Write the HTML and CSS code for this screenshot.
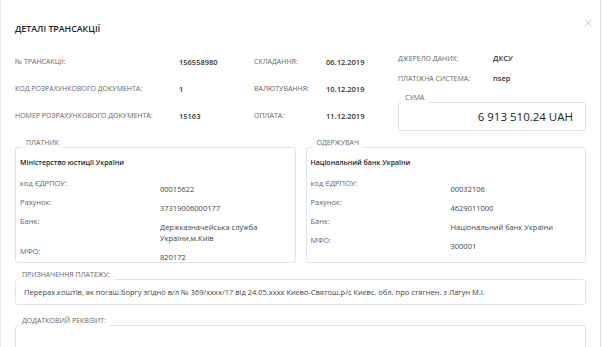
FILE: index.html
```html
<!DOCTYPE html>
<html lang="uk">
<head>
  <meta charset="UTF-8">
  <title>Деталі трансакції</title>
  <link rel="stylesheet" href="styles.css">
</head>
<body>
  <div class="modal">
    <span class="close">&#215;</span>
    <h1 class="title">ДЕТАЛІ ТРАНСАКЦІЇ</h1>

    <div class="info">
      <div class="col col1">
        <div class="row"><span class="lbl">№ ТРАНСАКЦІЇ:</span><span class="val">156558980</span></div>
        <div class="row"><span class="lbl">КОД РОЗРАХУНКОВОГО ДОКУМЕНТА:</span><span class="val">1</span></div>
        <div class="row"><span class="lbl">НОМЕР РОЗРАХУНКОВОГО ДОКУМЕНТА:</span><span class="val">15163</span></div>
      </div>
      <div class="col col2">
        <div class="row"><span class="lbl">СКЛАДАННЯ:</span><span class="val">06.12.2019</span></div>
        <div class="row"><span class="lbl">ВАЛЮТУВАННЯ:</span><span class="val">10.12.2019</span></div>
        <div class="row"><span class="lbl">ОПЛАТА:</span><span class="val">11.12.2019</span></div>
      </div>
      <div class="col col3">
        <div class="row row-sm"><span class="lbl">ДЖЕРЕЛО ДАНИХ:</span><span class="val">ДКСУ</span></div>
        <div class="row row-sm"><span class="lbl">ПЛАТІЖНА СИСТЕМА:</span><span class="val">nsep</span></div>
        <fieldset class="box sum">
          <legend>СУМА</legend>
          <div class="amount">6 913 510.24 UAH</div>
        </fieldset>
      </div>
    </div>

    <div class="parties">
      <fieldset class="box party">
        <legend>ПЛАТНИК</legend>
        <div class="name">Міністерство юстиції України</div>
        <div class="prow"><span class="plbl">код ЄДРПОУ:</span><span class="pval">00015622</span></div>
        <div class="prow"><span class="plbl">Рахунок:</span><span class="pval">37319006000177</span></div>
        <div class="prow"><span class="plbl">Банк:</span><span class="pval">Держказначейська служба<br>України,м.Київ</span></div>
        <div class="prow"><span class="plbl">МФО:</span><span class="pval">820172</span></div>
      </fieldset>
      <fieldset class="box party">
        <legend>ОДЕРЖУВАЧ</legend>
        <div class="name">Національний банк України</div>
        <div class="prow"><span class="plbl">код ЄДРПОУ:</span><span class="pval">00032106</span></div>
        <div class="prow"><span class="plbl">Рахунок:</span><span class="pval">4629011000</span></div>
        <div class="prow"><span class="plbl">Банк:</span><span class="pval">Національний банк України</span></div>
        <div class="prow"><span class="plbl">МФО:</span><span class="pval">300001</span></div>
      </fieldset>
    </div>

    <fieldset class="box wide">
      <legend>ПРИЗНАЧЕННЯ ПЛАТЕЖУ:</legend>
      <div class="purpose">Перерах.коштів, як погаш.боргу згідно в/л № 369/xxxx/17 від 24.05.xxxx Києво-Святош.р/с Києвс. обл. про стягнен. з Лагун М.І.</div>
    </fieldset>

    <fieldset class="box wide extra">
      <legend>ДОДАТКОВИЙ РЕКВІЗИТ:</legend>
    </fieldset>
  </div>
</body>
</html>
```

FILE: styles.css
```css
body { margin: 0; background: #fff; font-family: "Open Sans", "Noto Sans", sans-serif; color: #333; overflow: hidden; }
.modal { position: relative; width: 601px; height: 347px; box-sizing: border-box; padding: 0 14px; border-left: 1px solid #ececec; border-right: 1px solid #e2e2e2; overflow: hidden; }
.close { position: absolute; top: 12px; right: 7px; font-size: 16px; color: #cccccc; font-weight: 300; }
.title { margin: 0; padding-top: 23px; height: 48px; box-sizing: border-box; font-size: 8.8px; line-height: 12px; font-weight: 600; color: #222; }

.info { display: flex; }
.col1 { width: 239px; }
.col2 { width: 144px; }
.col3 { flex: 1; }
.row { display: flex; align-items: center; height: 27px; }
.row-sm { height: 20px; }
.col1 .lbl { width: 164px; }
.col2 .lbl { width: 72px; }
.col3 .lbl { width: 95px; }
.lbl { font-size: 7px; color: #666; text-transform: uppercase; }
.val { font-size: 7.5px; font-weight: 600; color: #333; }

.box { border: 1px solid #dfe4ef; border-radius: 3px; margin: 0; padding: 0; box-sizing: border-box; min-width: 0; }
.box legend { font-size: 7px; color: #666; line-height: 10px; padding: 0 4px 8px; margin: 0 0 -3px 2px; }

.sum { margin-top: 5px; height: 38px; padding: 0 12px 0 0; }
.amount { text-align: right; font-size: 11.5px; color: #222; line-height: 18px; }

.parties { display: flex; gap: 10px; margin-top: 7px; }
.party { flex: 1; padding: 4px 4px 5px; }
.name { font-size: 7px; font-weight: 600; color: #222; line-height: 12px; margin-bottom: 9px; }
.prow { display: flex; align-items: flex-start; margin-bottom: 8px; }
.prow:last-child { margin-bottom: 0; }
.plbl { width: 140px; font-size: 7.5px; color: #666; line-height: 11px; }
.pval { font-size: 7.5px; color: #444; line-height: 11px; padding-top: 6px; margin-bottom: -6px; }

.wide { margin: 7px 0 0 0; }
.purpose { font-size: 7.5px; color: #444; line-height: 12px; padding: 1px 8px 6px; }
.extra { height: 40px; margin-top: 11px; }
```
